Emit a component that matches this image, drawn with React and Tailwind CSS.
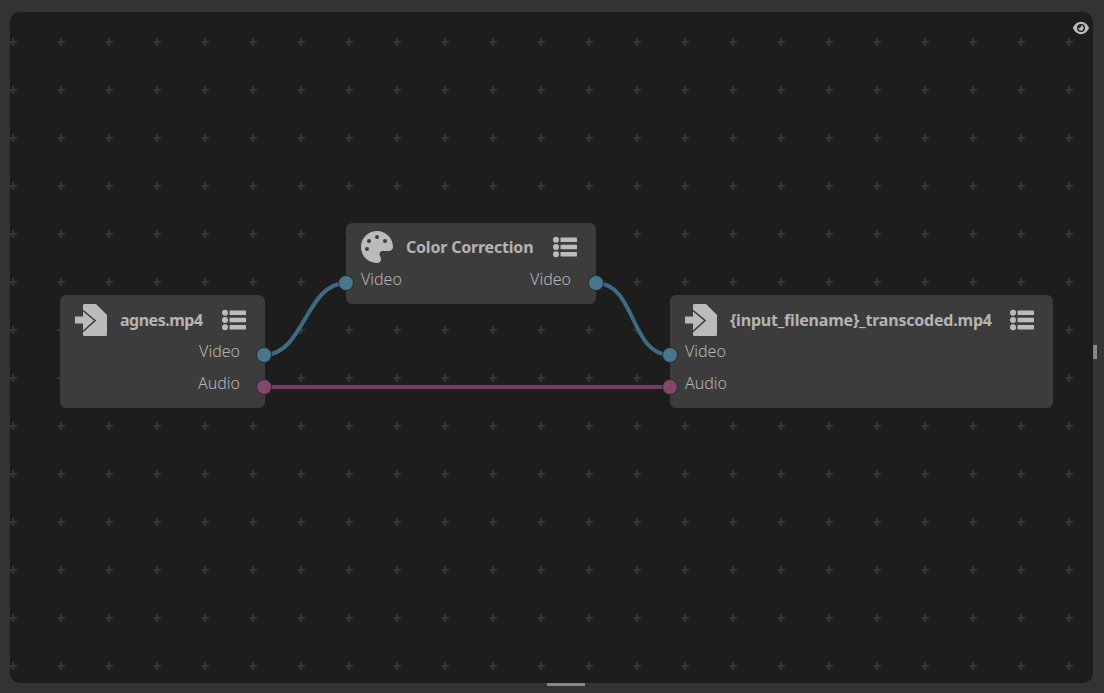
import { FaPalette, FaEye } from 'react-icons/fa6';

const font = "font-['Noto_Sans',sans-serif]";

function FileImportIcon({ className }) {
  return (
    <svg viewBox="0 0 32 32" className={className}>
      <path d="M8 1.2Q8 0 9.2 0H21L32 11V30.8Q32 32 30.8 32H9.2Q8 32 8 30.8Z" fill="currentColor" />
      <rect x="0" y="12.5" width="10" height="7" fill="currentColor" />
      <path d="M8 6.5L20 16.5L8 27.5" fill="none" stroke="#3c3c3c" strokeWidth="1.6" />
    </svg>
  );
}

function ListIcon({ className }) {
  return (
    <svg viewBox="0 0 24 24" className={className} fill="currentColor">
      <circle cx="3" cy="4.8" r="3" />
      <circle cx="3" cy="12" r="3" />
      <circle cx="3" cy="19.2" r="3" />
      <rect x="7.5" y="2.6" width="16.5" height="4.4" rx="0.6" />
      <rect x="7.5" y="9.8" width="16.5" height="4.4" rx="0.6" />
      <rect x="7.5" y="17" width="16.5" height="4.4" rx="0.6" />
    </svg>
  );
}

function Port({ color, pos }) {
  return (
    <div className={`absolute w-[16px] h-[16px] rounded-full border border-[#2a2a2a] ${color === 'video' ? 'bg-[#47778f]' : 'bg-[#85466c]'} ${pos}`} />
  );
}

function Node({ pos, Icon, title, titleClass, headerClass, inputs = [], outputs = [] }) {
  return (
    <div className={`absolute rounded-md bg-[#3c3c3c] ${pos}`}>
      <div className={`flex items-center h-[48px] mb-[-8px] pl-[15px] pr-[19px] ${headerClass}`}>
        <Icon className="shrink-0 w-[32px] h-[32px] text-[#bbbbbb]" />
        <div className={`flex-1 pl-[13px] text-[16px] font-bold text-[#b4b4b4] whitespace-nowrap ${titleClass}`}>{title}</div>
        <ListIcon className="shrink-0 w-[24px] h-[24px] text-[#bbbbbb]" />
      </div>
      <div className="flex justify-between pl-[15px] pr-[25px] text-[16px] font-light text-[#b4b4b4]">
        <div className="flex flex-col">
          {inputs.map((p) => <div key={p} className="h-[32px] leading-[32px]">{p}</div>)}
        </div>
        <div className="flex flex-col items-end">
          {outputs.map((p) => <div key={p} className="h-[32px] leading-[32px]">{p}</div>)}
        </div>
      </div>
    </div>
  );
}

export default function App() {
  return (
    <div className={`h-[693px] w-[1104px] overflow-hidden bg-[#333333] pt-[12px] pl-[10px] ${font}`}>
      <div className="relative w-[1083px] h-[671px] rounded-[10px] overflow-hidden bg-[#1d1d1d]">
        <svg className="absolute inset-0" width="1083" height="671">
          <defs>
            <pattern id="grid" x="3" y="30" width="48" height="48" patternUnits="userSpaceOnUse">
              <path d="M0 -4v8M-4 0h8M48 -4v8M44 0h8M0 44v8M-4 48h8M48 44v8M44 48h8" stroke="#3b3b3b" strokeWidth="1.5" />
            </pattern>
          </defs>
          <rect width="1083" height="671" fill="url(#grid)" />
          <path d="M254 343 C294 343 296 271 336 271" fill="none" stroke="#3e6a82" strokeWidth="4" />
          <path d="M586 271 C626 271 620 343 660 343" fill="none" stroke="#3e6a82" strokeWidth="4" />
          <path d="M254 375 L660 375" fill="none" stroke="#743f60" strokeWidth="4" />
        </svg>

        <FaEye className="absolute left-[1063px] top-[8px] w-[16px] h-[16px] text-[#bbbbbb]" />

        <Node
          pos="left-[50px] top-[283px] w-[205px] h-[113px]"
          Icon={FileImportIcon}
          title="agnes.mp4"
          titleClass="tracking-[-0.5px]"
          headerClass="pt-[2px]"
          outputs={['Video', 'Audio']}
        />
        <Node
          pos="left-[336px] top-[211px] w-[250px] h-[81px]"
          Icon={FaPalette}
          title="Color Correction"
          titleClass="tracking-[-0.2px]"
          inputs={['Video']}
          outputs={['Video']}
        />
        <Node
          pos="left-[660px] top-[283px] w-[383px] h-[113px]"
          Icon={FileImportIcon}
          title="{input_filename}_transcoded.mp4"
          titleClass="tracking-[-0.2px]"
          headerClass="pt-[2px]"
          inputs={['Video', 'Audio']}
        />

        <Port color="video" pos="left-[246px] top-[335px]" />
        <Port color="audio" pos="left-[246px] top-[367px]" />
        <Port color="video" pos="left-[328px] top-[263px]" />
        <Port color="video" pos="left-[578px] top-[263px]" />
        <Port color="video" pos="left-[652px] top-[335px]" />
        <Port color="audio" pos="left-[652px] top-[367px]" />
      </div>
      <div className="absolute left-[547px] top-[683px] w-[38px] h-[3px] bg-[#888888]" />
      <div className="absolute left-[1093px] top-[345px] w-[4px] h-[14px] bg-[#888888]" />
    </div>
  );
}
